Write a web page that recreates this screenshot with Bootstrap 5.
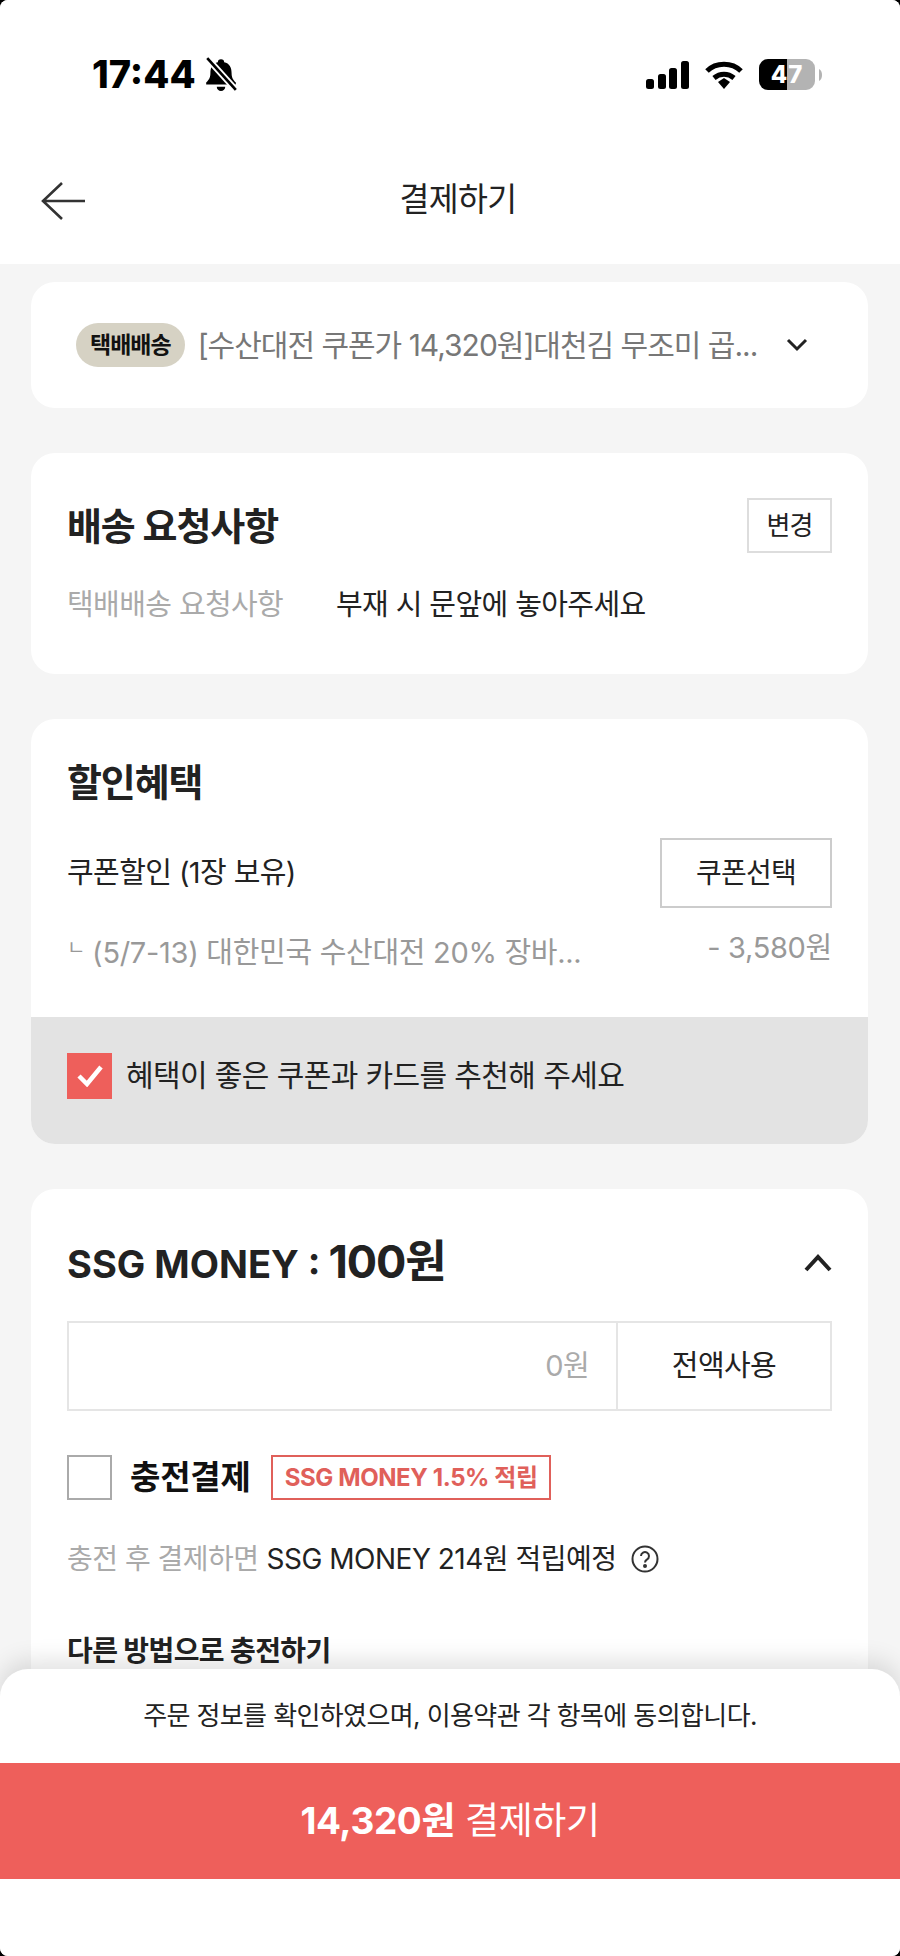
<!DOCTYPE html>
<html lang="ko">
<head>
    <meta charset="UTF-8">
    <meta name="viewport" content="width=device-width, initial-scale=1.0">
    <title>결제하기</title>
    <link href="https://cdn.jsdelivr.net/npm/bootstrap@5.3.0/dist/css/bootstrap.min.css" rel="stylesheet">
    <style>
        html, body {
            background-color: #000;
            height: 1956px;
            overflow: hidden;
        }
        body {
            font-family: Inter, "Noto Sans CJK KR", "Liberation Sans", sans-serif;
            font-size: 29px;
            color: #222;
            letter-spacing: -0.6px;
        }
        .screen {
            width: 900px;
            height: 1956px;
            background-color: #f5f5f5;
            border-radius: 8px;
            overflow: hidden;
        }
        .status-bar {
            height: 132px;
            padding: 52px 78px 0 92px;
        }
        .status-time {
            font-weight: 800;
            font-size: 38px;
            line-height: 44px;
            letter-spacing: 0;
            color: #000;
        }
        .status-right {
            margin-top: 7px;
        }
        .battery {
            width: 56px;
            height: 31px;
            border-radius: 9px;
            background: linear-gradient(90deg, #000 50%, #b3b3b3 50%);
            color: #fff;
            font-weight: 800;
            font-size: 24px;
            line-height: 31px;
            letter-spacing: 1px;
        }
        .nav-head {
            height: 132px;
            padding: 6px 41px 0;
        }
        .nav-title {
            font-size: 32.5px;
            line-height: 44px;
            left: 16px;
            right: 0;
            top: 46px;
        }
        .sheet-list {
            padding: 18px 32px 0 31px;
            gap: 45px;
        }
        .pane {
            border: 0;
            border-radius: 24px;
            background-color: #fff;
            overflow: hidden;
        }
        .pane-order {
            height: 126px;
            padding: 0 60px 0 45px;
        }
        .ship-badge {
            background-color: #d6d2c4;
            color: #111;
            font-size: 23px;
            font-weight: 700;
            line-height: 44px;
            padding: 0 14px;
            border-radius: 22px;
            letter-spacing: -1px;
        }
        .order-name {
            color: #777;
            letter-spacing: -1px;
            font-size: 30px;
            margin-left: 13px;
        }
        .pane-title {
            font-size: 38px;
            font-weight: 700;
            line-height: 50px;
            letter-spacing: -1.1px;
            margin: 0;
        }
        .pane-brand {
            letter-spacing: 0;
        }
        .pane-amount {
            font-size: 45px;
        }
        .pane-body {
            padding: 38px 36px 0 36px;
        }
        .pane-body-request {
            padding-top: 45px;
            padding-bottom: 49px;
        }
        .pane-body-money {
            padding-top: 48px;
            padding-bottom: 80px;
        }
        .line-btn {
            border: 2px solid #ddd;
            border-radius: 0;
            background-color: #fff;
            color: #222;
            padding: 0;
            letter-spacing: -0.8px;
        }
        .btn-change {
            width: 85px;
            height: 55px;
            font-size: 26px;
        }
        .btn-coupon {
            width: 172px;
            height: 70px;
            font-size: 28px;
            border-color: #ccc;
        }
        .muted-label {
            color: #aaa;
        }
        .req-label {
            width: 269px;
        }
        .req-row {
            margin-top: 32px;
            line-height: 40px;
        }
        .coupon-row {
            margin-top: 31px;
        }
        .coupon-sub {
            margin-top: 20px;
            line-height: 40px;
            color: #999;
            letter-spacing: -0.3px;
        }
        .sub-mark {
            font-size: 20px;
            vertical-align: 8px;
            margin-right: 7px;
        }
        .recommend {
            height: 127px;
            margin-top: 44px;
            background-color: #e3e3e3;
            padding: 0 36px 10px;
            gap: 14px;
            font-size: 30px;
        }
        .check-on {
            width: 45px;
            height: 46px;
            background-color: #ee5f5b;
        }
        .check-off {
            width: 45px;
            height: 45px;
            border: 2px solid #aaa;
        }
        .money-group {
            height: 90px;
            margin-top: 32px;
            border: 2px solid #e5e5e5;
        }
        .money-input {
            width: 549px;
            padding-right: 27px;
            color: #aaa;
            border-right: 2px solid #e5e5e5;
        }
        .charge-row {
            margin-top: 42px;
        }
        .charge-label {
            font-size: 33px;
            font-weight: 700;
            margin: 0 20px 0 18px;
            letter-spacing: -0.2px;
            color: #111;
        }
        .save-tag {
            border: 2px solid #e0605a;
            color: #e0605a;
            font-size: 24px;
            font-weight: 700;
            line-height: 41px;
            padding: 0 11px 0 12px;
            letter-spacing: -0.4px;
        }
        .charge-info {
            margin-top: 36px;
            line-height: 40px;
            font-size: 28px;
            letter-spacing: -0.5px;
        }
        .help-mark {
            width: 28px;
            height: 28px;
            margin-left: 14px;
        }
        .other-title {
            margin-top: 52px;
            font-size: 28px;
            font-weight: 700;
            line-height: 40px;
        }
        .pay-sheet {
            left: 0;
            right: 0;
            bottom: 0;
            height: 287px;
            background-color: #fff;
            border-radius: 28px 28px 0 0;
            box-shadow: 0 -8px 24px rgba(0, 0, 0, 0.12);
        }
        .agree-text {
            height: 94px;
            font-size: 26px;
            line-height: 94px;
            letter-spacing: -0.6px;
        }
        .pay-btn {
            height: 116px;
            border: 0;
            border-radius: 0;
            background-color: #ee5f5b;
            color: #fff;
            font-size: 37px;
            padding: 0;
            letter-spacing: -0.4px;
        }
        .pay-amount {
            font-weight: 700;
            margin-right: 10px;
        }
    </style>
</head>
<body>
    <div class="screen d-flex flex-column position-relative">
        <div class="bg-white">
            <div class="status-bar d-flex justify-content-between align-items-start">
                <div class="d-flex align-items-center gap-2">
                    <span class="status-time">17:44</span>
                    <svg width="34" height="36" viewBox="0 0 32 34">
                        <path d="M16 3a3 3 0 0 1 3 3c5 1 7 5 7 10 0 4 1 6 4 9v2H2v-2c3-3 4-5 4-9 0-5 2-9 7-10a3 3 0 0 1 3-3zM12 29h8a4 4 0 0 1-8 0z" fill="#000"/>
                        <path d="M3 2l27 30" stroke="#fff" stroke-width="6"/>
                        <path d="M3 2l27 30" stroke="#000" stroke-width="2.5"/>
                    </svg>
                </div>
                <div class="status-right d-flex align-items-center">
                    <svg width="43" height="28" viewBox="0 0 43 28" fill="#000">
                        <rect x="0" y="18" width="8" height="10" rx="2.5"/>
                        <rect x="12" y="13" width="8" height="15" rx="2.5"/>
                        <rect x="23" y="7" width="8" height="21" rx="2.5"/>
                        <rect x="35" y="0" width="8" height="28" rx="2.5"/>
                    </svg>
                    <svg class="ms-3" width="38" height="28" viewBox="0 0 38 28" fill="none" stroke="#000" stroke-width="5">
                        <path d="M2 10C11 1 27 1 36 10"/>
                        <path d="M9 17c6-5 14-5 20 0"/>
                        <path d="M13 21l6-4 6 4-6 7z" fill="#000" stroke="none"/>
                    </svg>
                    <div class="battery text-center ms-3">47</div>
                    <svg class="ms-1" width="3" height="12" viewBox="0 0 3 12"><path d="M0 0c2 1 3 3 3 6s-1 5-3 6z" fill="#b3b3b3"/></svg>
                </div>
            </div>
            <div class="nav-head d-flex align-items-center position-relative">
                <svg width="44" height="38" viewBox="0 0 44 38" fill="none" stroke="#333" stroke-width="2.6">
                    <path d="M21 1L2 19l19 18M2 19h42"/>
                </svg>
                <div class="nav-title position-absolute text-center">결제하기</div>
            </div>
        </div>

        <div class="sheet-list d-flex flex-column">
            <div class="card pane pane-order flex-row align-items-center">
                <span class="ship-badge">택배배송</span>
                <span class="order-name flex-grow-1">[수산대전 쿠폰가 14,320원]대천김 무조미 곱...</span>
                <svg width="22" height="14" viewBox="0 0 22 14" fill="none" stroke="#222" stroke-width="3">
                    <path d="M2 2l9 9 9-9"/>
                </svg>
            </div>

            <div class="card pane">
                <div class="pane-body pane-body-request">
                    <div class="d-flex justify-content-between align-items-center">
                        <h2 class="pane-title">배송 요청사항</h2>
                        <button class="btn line-btn btn-change" type="button">변경</button>
                    </div>
                    <div class="req-row d-flex">
                        <span class="muted-label req-label">택배배송 요청사항</span>
                        <span>부재 시 문앞에 놓아주세요</span>
                    </div>
                </div>
            </div>

            <div class="card pane">
                <div class="pane-body">
                    <h2 class="pane-title">할인혜택</h2>
                    <div class="coupon-row d-flex justify-content-between align-items-center">
                        <span>쿠폰할인 (1장 보유)</span>
                        <button class="btn line-btn btn-coupon" type="button">쿠폰선택</button>
                    </div>
                    <div class="coupon-sub d-flex justify-content-between">
                        <span><span class="sub-mark">ㄴ</span>(5/7-13) 대한민국 수산대전 20% 장바...</span>
                        <span>- 3,580원</span>
                    </div>
                </div>
                <div class="recommend d-flex align-items-center">
                    <span class="check-on d-flex align-items-center justify-content-center">
                        <svg width="26" height="22" viewBox="0 0 26 22" fill="none" stroke="#fff" stroke-width="4.5">
                            <path d="M2 11l8 8L24 2"/>
                        </svg>
                    </span>
                    <span>혜택이 좋은 쿠폰과 카드를 추천해 주세요</span>
                </div>
            </div>

            <div class="card pane">
                <div class="pane-body pane-body-money">
                    <div class="d-flex justify-content-between align-items-center">
                        <h2 class="pane-title"><span class="pane-brand">SSG MONEY :</span> <span class="pane-amount">100원</span></h2>
                        <svg width="28" height="18" viewBox="0 0 28 18" fill="none" stroke="#222" stroke-width="4">
                            <path d="M2 16L14 3l12 13"/>
                        </svg>
                    </div>
                    <div class="money-group d-flex">
                        <div class="money-input d-flex align-items-center justify-content-end">0원</div>
                        <div class="flex-grow-1 d-flex align-items-center justify-content-center">전액사용</div>
                    </div>
                    <div class="charge-row d-flex align-items-center">
                        <span class="check-off"></span>
                        <span class="charge-label">충전결제</span>
                        <span class="save-tag">SSG MONEY 1.5% 적립</span>
                    </div>
                    <div class="charge-info d-flex align-items-center">
                        <span class="muted-label me-2">충전 후 결제하면</span>
                        <span>SSG MONEY 214원 적립예정</span>
                        <svg class="help-mark" viewBox="0 0 28 28" fill="none" stroke="#333" stroke-width="2">
                            <circle cx="14" cy="14" r="12.5"/>
                            <path d="M10 11a4 4 0 1 1 6 3.500c-1.500.8-2 1.500-2 3"/>
                            <circle cx="14" cy="21" r="1" fill="#333"/>
                        </svg>
                    </div>
                    <div class="other-title">다른 방법으로 충전하기</div>
                </div>
            </div>
        </div>

        <div class="pay-sheet position-absolute">
            <div class="agree-text text-center">주문 정보를 확인하였으며, 이용약관 각 항목에 동의합니다.</div>
            <button class="btn pay-btn w-100" type="button"><span class="pay-amount">14,320원</span>결제하기</button>
        </div>
    </div>
    <script src="https://cdn.jsdelivr.net/npm/bootstrap@5.3.0/dist/js/bootstrap.bundle.min.js"></script>
</body>
</html>
